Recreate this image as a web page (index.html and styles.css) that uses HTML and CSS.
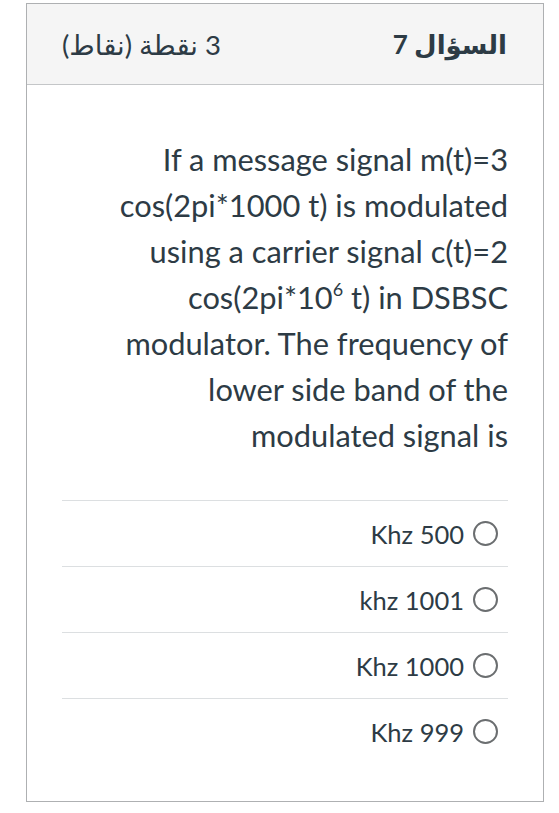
FILE: index.html
```html
<!DOCTYPE html>
<html lang="ar">
<head>
<meta charset="utf-8">
<link rel="stylesheet" href="styles.css">
</head>
<body>
<div class="card">
  <div class="header" dir="rtl">
    <span class="q-title">السؤال 7</span>
    <span class="q-points">3 نقطة (نقاط)</span>
  </div>
  <div class="content">
    <div class="question">If a message signal m(t)=3 cos(2pi*1000 t) is modulated using a carrier signal c(t)=2 cos(2pi*10<sup>6</sup> t) in DSBSC modulator. The frequency of lower side band of the modulated signal is</div>
    <div class="answers">
      <label class="answer"><span class="label">Khz 500</span><span class="radio"></span></label>
      <label class="answer"><span class="label">khz 1001</span><span class="radio"></span></label>
      <label class="answer"><span class="label">Khz 1000</span><span class="radio"></span></label>
      <label class="answer"><span class="label">Khz 999</span><span class="radio"></span></label>
    </div>
  </div>
</div>
</body>
</html>
```

FILE: styles.css
```css
html, body {
  margin: 0;
  padding: 0;
  background: #ffffff;
}
body {
  padding: 3px 15px 0 26px;
  font-family: Lato, "DejaVu Sans", sans-serif;
  color: #2d3b45;
}
.card {
  width: 518px;
  height: 799px;
  border: 1px solid #aeb0b2;
  box-sizing: border-box;
  display: flex;
  flex-direction: column;
}
.header {
  height: 81px;
  background: #f5f5f5;
  border-bottom: 1px solid #c4c6c8;
  display: flex;
  justify-content: space-between;
  align-items: center;
  padding: 0 36px 0 35px;
  box-sizing: border-box;
  flex-shrink: 0;
}
.q-title {
  font-family: Lato, "DejaVu Sans", sans-serif;
  font-size: 26px;
  font-weight: bold;
  color: #2d3b45;
}
.q-points {
  font-family: Lato, "DejaVu Sans", sans-serif;
  font-size: 27.5px;
  color: #2d3b45;
}
.content {
  padding: 52px 35px 0 35px;
}
.question {
  text-align: right;
  font-size: 30.8px;
  line-height: 46px;
}
.question sup {
  font-size: 18px;
  line-height: 0;
  vertical-align: 13px;
}
.answers {
  margin-top: 41px;
}
.answer {
  display: flex;
  justify-content: flex-end;
  align-items: center;
  gap: 9px;
  height: 66px;
  border-top: 1px solid #dcdfe1;
  box-sizing: border-box;
  padding-right: 10px;
  font-size: 25.5px;
}
.radio {
  width: 25px;
  height: 25px;
  border: 2px solid #6b6e70;
  border-radius: 50%;
  box-sizing: border-box;
  flex-shrink: 0;
}
```
